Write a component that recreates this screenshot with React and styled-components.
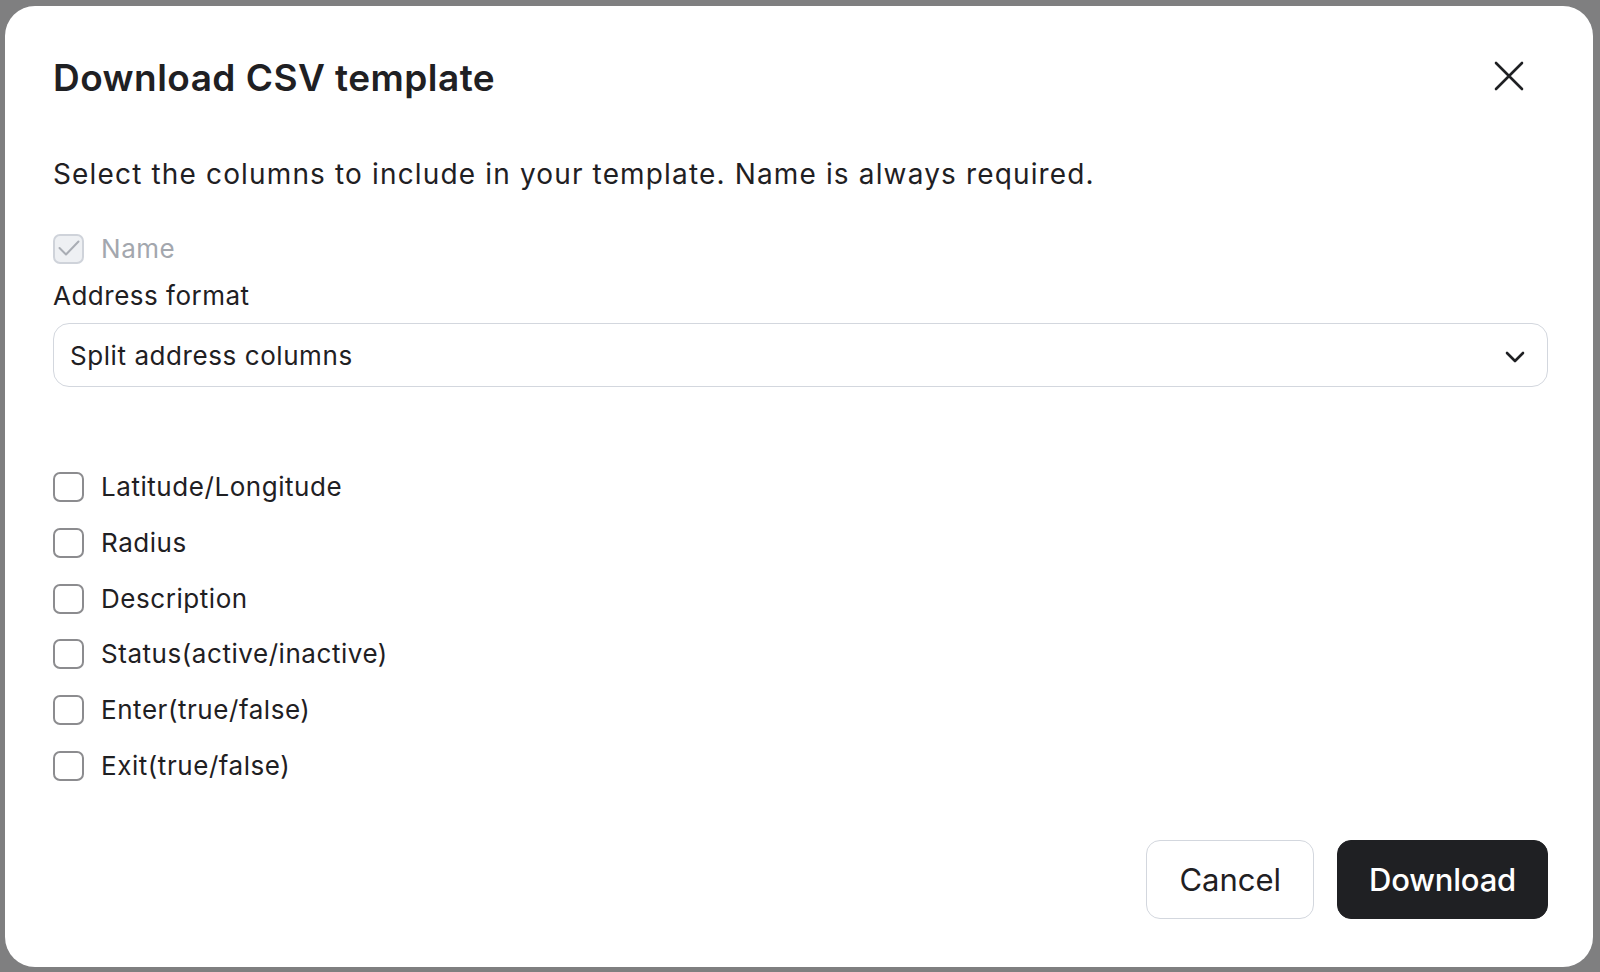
import React, { useState } from "react";
import styled, { createGlobalStyle } from "styled-components";

const COLORS = {
  text: "#1f2023",
  muted: "#a3a7ae",
  border: "#d3d7de",
  boxBorder: "#8c8c8f",
  backdrop: "#7f7f80",
};

const GlobalStyle = createGlobalStyle`
  html, body {
    margin: 0;
    padding: 0;
    background: ${COLORS.backdrop};
  }
  body {
    font-family: Inter, "Noto Sans", "Liberation Sans", sans-serif;
    color: ${COLORS.text};
    -webkit-font-smoothing: antialiased;
  }
  * {
    box-sizing: border-box;
  }
`;

const COLUMNS = [
  "Latitude/Longitude",
  "Radius",
  "Description",
  "Status(active/inactive)",
  "Enter(true/false)",
  "Exit(true/false)",
];

const App = () => {
  const [checked, setChecked] = useState({});

  const toggle = (name) => {
    setChecked((prev) => ({ ...prev, [name]: !prev[name] }));
  };

  return (
    <>
      <GlobalStyle />
      <Backdrop>
        <Modal>
          <Header>
            <Title>Download CSV template</Title>
            <CloseButton aria-label="Close">
              <svg width="30" height="30" viewBox="0 0 30 30" fill="none">
                <path
                  d="M2 2L28 28M28 2L2 28"
                  stroke={COLORS.text}
                  strokeWidth="2.6"
                  strokeLinecap="round"
                />
              </svg>
            </CloseButton>
          </Header>

          <Intro>
            Select the columns to include in your template. Name is always
            required.
          </Intro>

          <CheckRow disabled>
            <Box disabled checked>
              <svg width="26" height="26" viewBox="0 0 26 26" fill="none">
                <path
                  d="M3.5 12L10 18.5L22.5 5.5"
                  stroke="#a9adb4"
                  strokeWidth="2"
                  strokeLinecap="round"
                  strokeLinejoin="round"
                />
              </svg>
            </Box>
            <CheckLabel disabled>Name</CheckLabel>
          </CheckRow>

          <FieldLabel>Address format</FieldLabel>
          <Select>
            <span>Split address columns</span>
            <svg width="20" height="12" viewBox="0 0 20 12" fill="none">
              <path
                d="M2 2L10 10L18 2"
                stroke={COLORS.text}
                strokeWidth="2.6"
                strokeLinecap="round"
                strokeLinejoin="round"
              />
            </svg>
          </Select>

          <CheckList>
            {COLUMNS.map((name) => (
              <CheckRow key={name} onClick={() => toggle(name)}>
                <Box checked={!!checked[name]} />
                <CheckLabel>{name}</CheckLabel>
              </CheckRow>
            ))}
          </CheckList>

          <Footer>
            <Button>Cancel</Button>
            <Button primary>Download</Button>
          </Footer>
        </Modal>
      </Backdrop>
    </>
  );
};

const Backdrop = styled.div`
  width: 1600px;
  height: 972px;
  padding: 6px 7px 5px 5px;
  display: flex;
`;

const Modal = styled.div`
  flex: 1;
  background: #fff;
  border-radius: 30px;
  padding: 50px 45px 48px 48px;
  display: flex;
  flex-direction: column;
`;

const Header = styled.div`
  display: flex;
  justify-content: space-between;
  align-items: flex-start;
`;

const Title = styled.h2`
  margin: 0;
  font-size: 37px;
  line-height: 44px;
  font-weight: 600;
  letter-spacing: 0.45px;
`;

const CloseButton = styled.button`
  width: 44px;
  height: 44px;
  margin: -2px 17px 0 0;
  padding: 0;
  border: none;
  background: transparent;
  display: flex;
  align-items: center;
  justify-content: center;
  cursor: pointer;
`;

const Intro = styled.p`
  margin: 56px 0 42px;
  font-size: 28px;
  line-height: 36px;
  font-weight: 400;
  letter-spacing: 1.15px;
`;

const CheckList = styled.div`
  display: flex;
  flex-direction: column;
  gap: 25.8px;
  margin-top: 85px;
`;

const CheckRow = styled.label`
  display: flex;
  align-items: center;
  gap: 17px;
  height: 30px;
  cursor: ${(p) => (p.disabled ? "default" : "pointer")};
`;

const Box = styled.span`
  width: 31px;
  height: 30px;
  flex-shrink: 0;
  border-radius: 7px;
  border: 2px solid
    ${(p) => (p.disabled ? "#cfd3da" : p.checked ? COLORS.text : COLORS.boxBorder)};
  background: ${(p) => (p.disabled ? "#eef0f3" : p.checked ? COLORS.text : "#fff")};
  display: flex;
  align-items: center;
  justify-content: center;
`;

const CheckLabel = styled.span`
  font-size: 26px;
  line-height: 30px;
  letter-spacing: 0.55px;
  color: ${(p) => (p.disabled ? COLORS.muted : COLORS.text)};
`;

const FieldLabel = styled.div`
  margin: 17px 0 12px;
  font-size: 26px;
  line-height: 30px;
  letter-spacing: 0.5px;
`;

const Select = styled.div`
  height: 64px;
  border: 1px solid ${COLORS.border};
  border-radius: 16px;
  padding: 0 22px 0 16px;
  display: flex;
  align-items: center;
  justify-content: space-between;
  font-size: 26px;
  letter-spacing: 0.57px;
  cursor: pointer;

  svg {
    margin-top: 4px;
  }
`;

const Footer = styled.div`
  margin-top: auto;
  display: flex;
  justify-content: flex-end;
  gap: 23px;
`;

const Button = styled.button`
  height: 79px;
  padding: 0 ${(p) => (p.primary ? 31 : 32)}px;
  border-radius: 14px;
  font-family: inherit;
  font-size: 31px;
  font-weight: ${(p) => (p.primary ? 500 : 400)};
  letter-spacing: ${(p) => (p.primary ? "-0.2px" : "0")};
  color: ${(p) => (p.primary ? "#fff" : COLORS.text)};
  background: ${(p) => (p.primary ? "#1f2023" : "#fff")};
  border: 1px solid ${(p) => (p.primary ? "#1f2023" : COLORS.border)};
  cursor: pointer;
`;

export default App;
